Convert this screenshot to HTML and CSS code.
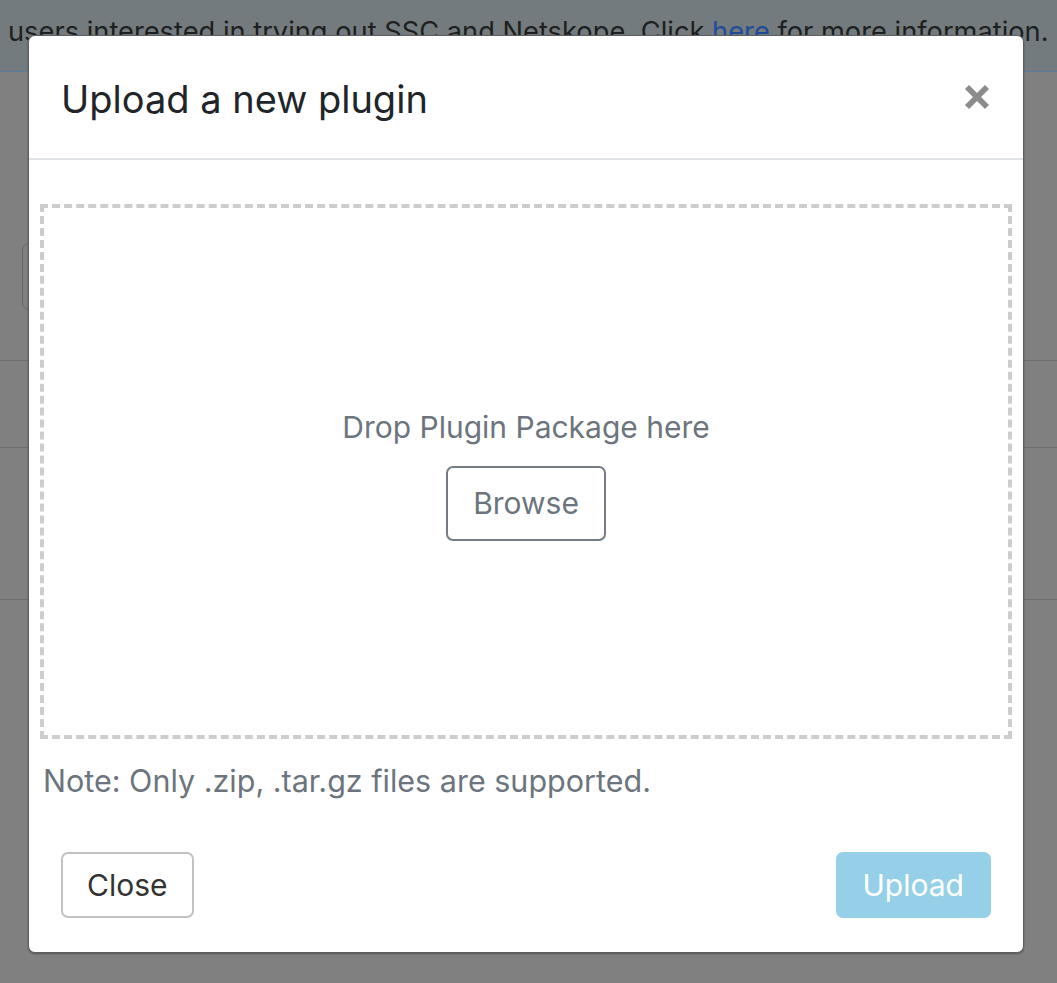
FILE: index.html
```html
<!DOCTYPE html>
<html lang="en">
<head>
<meta charset="utf-8">
<title>Upload a new plugin</title>
<link rel="stylesheet" href="styles.css">
</head>
<body>
  <div class="page">
    <div class="banner">
      <p class="banner-text">users interested in trying out SSC and Netskope. Click <a class="banner-link" href="#">here</a> for more information.</p>
    </div>
    <div class="content">
      <div class="toolbar"><div class="search"></div></div>
      <div class="row row-a"></div>
      <div class="row row-b"></div>
      <div class="row row-c"></div>
    </div>
  </div>

  <div class="modal">
    <div class="modal-header">
      <h4 class="modal-title">Upload a new plugin</h4>
      <button class="close" type="button" aria-label="Close">
        <svg width="26" height="26" viewBox="0 0 26 26"><path d="M3 3 L23 23 M23 3 L3 23" stroke="#8c8c8c" stroke-width="5.8" fill="none"/></svg>
      </button>
    </div>
    <div class="modal-body">
      <div class="dropzone">
        <div class="drop-text">Drop Plugin Package here</div>
        <button class="btn-browse" type="button">Browse</button>
      </div>
      <p class="note">Note: Only .zip, .tar.gz files are supported.</p>
    </div>
    <div class="modal-footer">
      <button class="btn-close" type="button">Close</button>
      <button class="btn-upload" type="button" disabled>Upload</button>
    </div>
  </div>
</body>
</html>
```

FILE: styles.css
```css
* { box-sizing: border-box; }

html, body {
  margin: 0;
  padding: 0;
  background: #808080;
  height: 100%;
  overflow: hidden;
}

body {
  font-family: "Inter", "Liberation Sans", sans-serif;
  position: relative;
}

.page {
  width: 100%;
}

.banner {
  height: 72px;
  background: #737b7e;
  border-bottom: 1px solid #5a7c9c;
  padding: 17px 0 0 8px;
  overflow: hidden;
}

.banner-text {
  margin: 0;
  font-family: "Inter", "Liberation Sans", sans-serif;
  font-size: 27.25px;
  line-height: 30px;
  color: #1d1f20;
  white-space: nowrap;
}

.banner-link {
  color: #1f4c97;
  text-decoration: none;
}

.content {
  width: 100%;
}

.toolbar {
  padding: 171px 0 0 22px;
}

.search {
  width: 420px;
  height: 67px;
  border: 1px solid #686868;
  border-radius: 7px;
}

.row {
  border-top: 1px solid #6e6e6e;
}

.row-a { margin-top: 50px; height: 87px; }
.row-b { height: 152px; }
.row-c { height: 200px; }

.modal {
  position: absolute;
  left: 28px;
  top: 35px;
  width: 996px;
  height: 918px;
  background: #fff;
  border: 1px solid #5e5e5e;
  border-radius: 7px;
  box-shadow: 0 1px 2px rgba(0, 0, 0, 0.35);
  display: flex;
  flex-direction: column;
}

.modal-header {
  height: 124px;
  border-bottom: 2px solid #dfe2e6;
  padding: 0 33px 0 32px;
  display: flex;
  align-items: center;
  justify-content: space-between;
}

.modal-title {
  margin: 0;
  font-size: 38px;
  line-height: 46px;
  font-weight: 400;
  color: #212529;
  padding-top: 3px;
}

.close {
  border: 0;
  background: transparent;
  padding: 0;
  width: 26px;
  height: 26px;
  display: flex;
  cursor: pointer;
}

.modal-body {
  padding: 44px 11px 0;
}

.dropzone {
  height: 535px;
  border: 4px dashed #cdcdcd;
  display: flex;
  flex-direction: column;
  align-items: center;
  justify-content: center;
  padding-top: 6px;
}

.drop-text {
  font-size: 30px;
  line-height: 36px;
  color: #6c757d;
}

.btn-browse {
  margin-top: 21px;
  height: 75px;
  padding: 0 25px;
  border: 2px solid #757c83;
  border-radius: 7px;
  background: #fff;
  font-family: "Inter", "Liberation Sans", sans-serif;
  font-size: 30px;
  color: #6c757d;
}

.note {
  margin: 21px 0 0;
  padding-left: 3px;
  font-size: 30.5px;
  line-height: 42px;
  color: #6c757d;
}

.modal-footer {
  padding: 50px 32px 32px;
  display: flex;
  justify-content: space-between;
  align-items: center;
}

.btn-close,
.btn-upload {
  height: 66px;
  border-radius: 7px;
  font-family: "Inter", "Liberation Sans", sans-serif;
  font-size: 30px;
}

.btn-close {
  padding: 0 24px;
  border: 2px solid #c2c2c2;
  background: #fff;
  color: #333;
}

.btn-upload {
  padding: 0 27px;
  border: 0;
  background: #95d0e8;
  color: #fff;
}
```
